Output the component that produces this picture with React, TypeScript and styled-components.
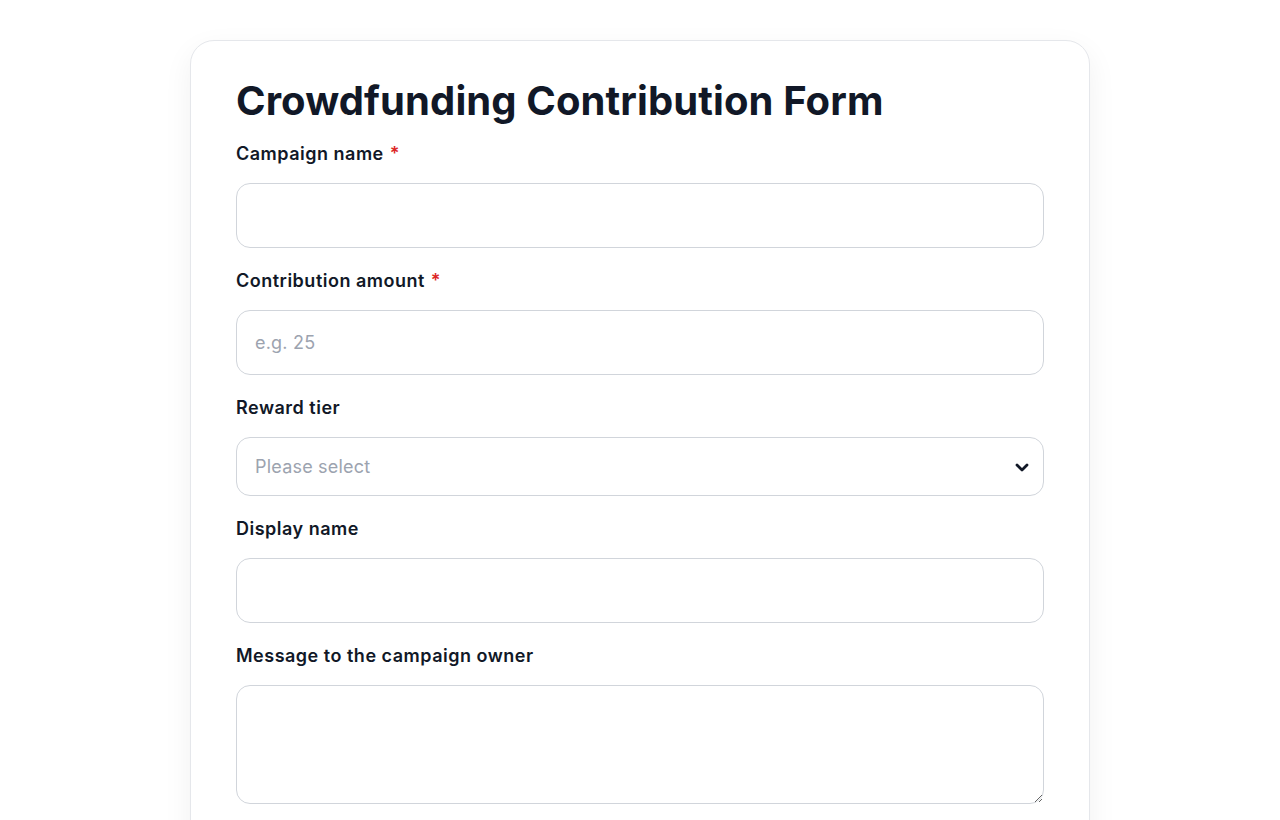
import React from "react";
import styled, { createGlobalStyle } from "styled-components";

const Global = createGlobalStyle`
  * { box-sizing: border-box; }
  body { margin: 0; background: #ffffff; font-family: Inter, "Noto Sans", sans-serif; color: #111827; }
`;

const Page = styled.main`
  display: flex;
  justify-content: center;
  padding-top: 40px;
  min-height: 820px;
`;

const Card = styled.form`
  width: 900px;
  background: #fff;
  border: 1px solid #e5e7eb;
  border-radius: 24px;
  box-shadow: 0 10px 30px rgba(17, 24, 39, 0.06);
  padding: 36px 45px 40px;
  display: flex;
  flex-direction: column;
`;

const Title = styled.h1`
  margin: 0 0 17px;
  font-size: 40px;
  line-height: 48px;
  font-weight: 700;
  letter-spacing: 0.1px;
  color: #111827;
`;

const Field = styled.div`
  display: flex;
  flex-direction: column;
  gap: 17px;
  margin-bottom: 21px;
`;

const Label = styled.label`
  font-size: 18px;
  line-height: 24px;
  font-weight: 600;
  letter-spacing: 0.5px;
  color: #111827;
`;

const Req = styled.span`
  color: #dc2626;
  margin-left: 6px;
`;

const inputBase = `
  width: 100%;
  border: 1px solid #d1d5db;
  border-radius: 14px;
  background: #fff;
  font-family: Inter, "Noto Sans", sans-serif;
  font-size: 18px;
  letter-spacing: 0.2px;
  color: #111827;
  padding: 0 18px;
  outline: none;
  &::placeholder { color: #9ca3af; }
`;

const Input = styled.input`
  ${inputBase}
  height: 65px;
`;

const SelectWrap = styled.div`
  position: relative;
`;

const Select = styled.select`
  ${inputBase}
  height: 59px;
  appearance: none;
  color: #9ca3af;
`;

const Chevron = styled.svg`
  position: absolute;
  right: 10px;
  top: 50%;
  transform: translateY(-50%);
  pointer-events: none;
`;

const TextArea = styled.textarea`
  ${inputBase}
  height: 119px;
  padding: 16px 18px;
  resize: vertical;
`;

export default function App() {
  return (
    <>
      <Global />
      <Page>
        <Card onSubmit={(e) => e.preventDefault()}>
          <Title>Crowdfunding Contribution Form</Title>
          <Field>
            <Label>
              Campaign name<Req>*</Req>
            </Label>
            <Input type="text" />
          </Field>
          <Field>
            <Label>
              Contribution amount<Req>*</Req>
            </Label>
            <Input type="text" placeholder="e.g. 25" />
          </Field>
          <Field>
            <Label>Reward tier</Label>
            <SelectWrap>
              <Select defaultValue="">
                <option value="" disabled>
                  Please select
                </option>
                <option>Early bird</option>
                <option>Supporter</option>
                <option>Backer</option>
              </Select>
              <Chevron width="24" height="24" viewBox="0 0 24 24" fill="none" stroke="#111827" strokeWidth="2.8" strokeLinecap="round" strokeLinejoin="round">
                <path d="M7 10l5 5 5-5" />
              </Chevron>
            </SelectWrap>
          </Field>
          <Field>
            <Label>Display name</Label>
            <Input type="text" />
          </Field>
          <Field>
            <Label>Message to the campaign owner</Label>
            <TextArea />
          </Field>
        </Card>
      </Page>
    </>
  );
}
